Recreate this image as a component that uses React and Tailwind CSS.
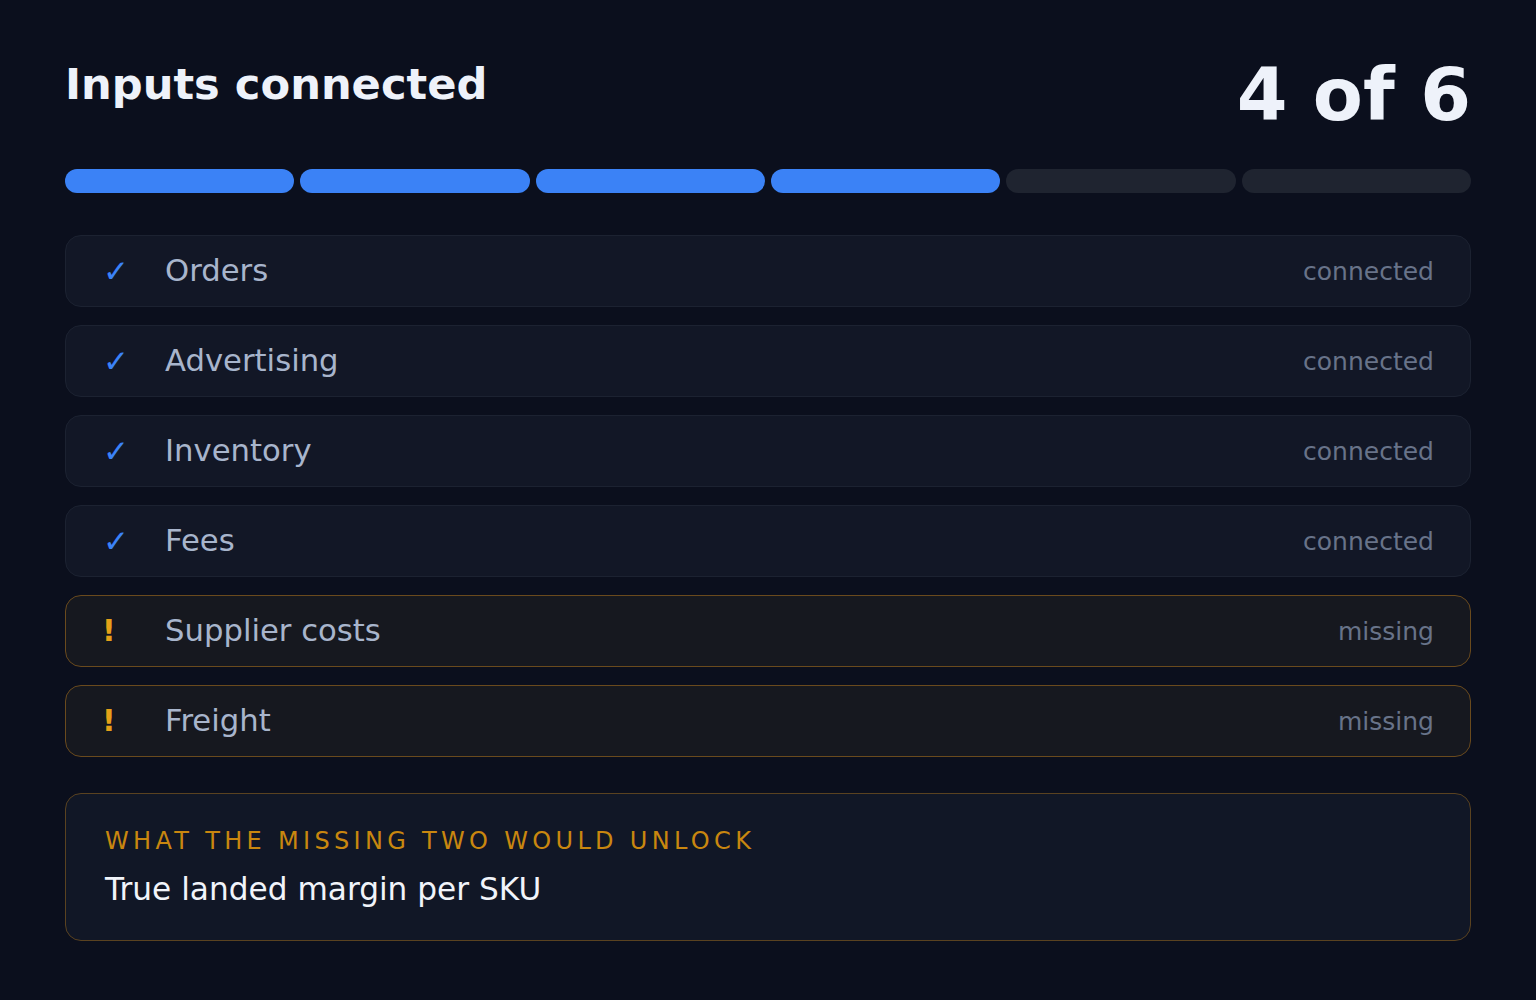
import React from 'react';

const inputs = [
  { name: 'Orders', ok: true },
  { name: 'Advertising', ok: true },
  { name: 'Inventory', ok: true },
  { name: 'Fees', ok: true },
  { name: 'Supplier costs', ok: false },
  { name: 'Freight', ok: false },
];

const font = { fontFamily: '"DejaVu Sans", "Liberation Sans", sans-serif' };

const InputRow = ({ name, ok }) => (
  <div
    className={
      ok
        ? 'flex h-[72px] items-center rounded-2xl border border-[#1c2231] bg-[#121726] pl-[39px] pr-[36px]'
        : 'flex h-[72px] items-center rounded-2xl border border-[#6a4a1d] bg-[#16181f] pl-[39px] pr-[36px]'
    }
  >
    <span className="w-[60px] shrink-0 leading-none">
      {ok ? (
        <span className="-ml-[2px] text-[31px] text-[#3b82f6]">✓</span>
      ) : (
        <span className="-ml-[3px] text-[30px] font-bold text-[#e5a118]">!</span>
      )}
    </span>
    <span className="mt-[1px] flex-1 text-[30.7px] leading-none text-[#a8b5cc]">{name}</span>
    <span className="text-[25px] leading-none text-[#687389]">{ok ? 'connected' : 'missing'}</span>
  </div>
);

export default function App() {
  const done = inputs.filter((i) => i.ok).length;

  return (
    <div className="min-h-[1000px] w-full bg-[#0b0f1d] px-[65px] pt-[59px]" style={font}>
      {/* header */}
      <div className="flex items-start justify-between">
        <h1 className="mt-[4px] text-[43.2px] font-bold leading-none text-[#eef2fa]">Inputs connected</h1>
        <div className="-mt-[1px] text-[73px] font-bold leading-none text-[#eef2fa]">
          {done} of {inputs.length}
        </div>
      </div>

      {/* progress */}
      <div className="mt-[38px] flex gap-[6px]">
        {inputs.map((i, idx) => (
          <div
            key={idx}
            className={i.ok ? 'h-6 flex-1 rounded-full bg-[#3b82f6]' : 'h-6 flex-1 rounded-full bg-[#1f2430]'}
          />
        ))}
      </div>

      {/* rows */}
      <div className="mt-[42px] flex flex-col gap-[18px]">
        {inputs.map((i) => (
          <InputRow key={i.name} {...i} />
        ))}
      </div>

      {/* unlock box */}
      <div className="mt-[36px] rounded-2xl border border-[#5a4220] bg-[#111726] pb-[35px] pl-[39px] pt-[35px]">
        <div className="text-[24px] uppercase leading-none tracking-[0.18em] text-[#c9870f]">
          What the missing two would unlock
        </div>
        <div className="mt-[21px] text-[31.2px] leading-none text-[#f1f4fa]">True landed margin per SKU</div>
      </div>
    </div>
  );
}
